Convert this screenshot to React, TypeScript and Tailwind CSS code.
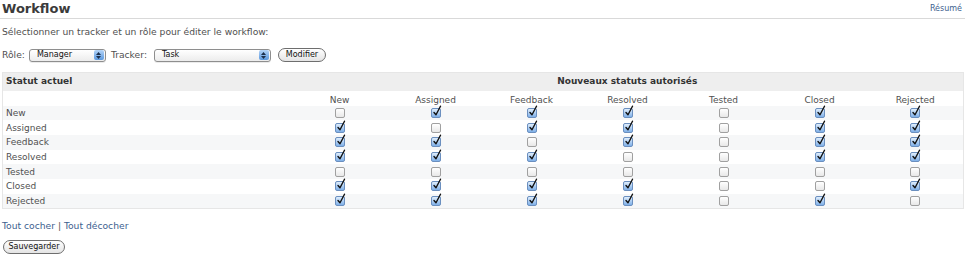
const statuses = ["New", "Assigned", "Feedback", "Resolved", "Tested", "Closed", "Rejected"];

// rows = current status, columns = new allowed status
const matrix = [
  [0, 1, 1, 1, 0, 1, 1],
  [1, 0, 1, 1, 0, 1, 1],
  [1, 1, 0, 1, 0, 1, 1],
  [1, 1, 1, 0, 0, 1, 1],
  [0, 0, 0, 0, 0, 0, 0],
  [1, 1, 1, 1, 0, 0, 1],
  [1, 1, 1, 1, 0, 1, 0],
];

const Checkbox = ({ checked }: { checked: boolean }) => {
  return (
    <span className="relative inline-block w-[10px] h-[10px] align-middle">
      {checked ? (
        <span className="absolute inset-0 rounded-[2px] border border-[#6b8fbf] bg-linear-to-b from-[#e0eefc] to-[#7fb0e8]" />
      ) : (
        <span className="absolute inset-0 rounded-[2px] border border-[#a0a0a0] bg-linear-to-b from-white to-[#e8e8e8]" />
      )}
      {checked && (
        <svg className="absolute left-[1px] top-[-3px]" width="10" height="12" viewBox="0 0 10 12">
          <path d="M2 7.5 L4 9.8 L8.5 1.2" fill="none" stroke="#111" strokeWidth="1.4" strokeLinecap="round" strokeLinejoin="round" />
        </svg>
      )}
    </span>
  );
};

const Select = ({ value, width }: { value: string; width: string }) => {
  return (
    <div className={`${width} h-[13px] flex items-center rounded-[3px] border border-[#8e8e8e] bg-linear-to-b from-white to-[#ececec] shadow-[0_1px_0_rgba(0,0,0,0.08)]`}>
      <span className="flex-1 pl-[7px] text-[8px] text-[#111] leading-none">{value}</span>
      <span className="w-[10px] h-[10px] mr-[1px] rounded-[2px] bg-linear-to-b from-[#b4d4f7] to-[#5a98de] flex flex-col items-center justify-center gap-[1px]">
        <svg width="5" height="3" viewBox="0 0 5 3"><path d="M0 3 L2.5 0 L5 3 Z" fill="#1c2f4a" /></svg>
        <svg width="5" height="3" viewBox="0 0 5 3"><path d="M0 0 L2.5 3 L5 0 Z" fill="#1c2f4a" /></svg>
      </span>
    </div>
  );
};

const PillButton = ({ label, width }: { label: string; width: string }) => {
  return (
    <button className={`${width} h-[14px] rounded-full border border-[#6e6e6e] bg-linear-to-b from-white to-[#e4e4e4] text-[8px] text-[#111] leading-none flex items-center justify-center`}>
      {label}
    </button>
  );
};

export default function App() {
  return (
    <div className="w-[965px] h-[259px] bg-white text-[#505050] overflow-hidden" style={{ fontFamily: '"DejaVu Sans", Verdana, sans-serif' }}>
      {/* Title */}
      <div className="h-[19px] flex justify-between items-start border-b border-[#d9d9d9] pl-[2px] pr-[3px]">
        <h2 className="text-[13px] leading-[17px] font-bold text-[#3b3b3b]">Workflow</h2>
        <a className="text-[8px] leading-none pt-[5px] text-[#3d5f8f]">Résumé</a>
      </div>

      <p className="mt-[6px] h-[14px] leading-[14px] text-[9.2px] pl-[2px]">
        Sélectionner un tracker et un rôle pour éditer le workflow:
      </p>

      <div className="mt-[9px] h-[14px] flex items-center pl-[2px] text-[9.2px]">
        <span>Rôle:</span>
        <div className="ml-[4px]"><Select value="Manager" width="w-[77px]" /></div>
        <span className="ml-[5px]">Tracker:</span>
        <div className="ml-[7px]"><Select value="Task" width="w-[117px]" /></div>
        <div className="ml-[7px]"><PillButton label="Modifier" width="w-[48px]" /></div>
      </div>

      {/* Workflow table */}
      <table className="mt-[10px] ml-[2px] w-[961px] border-collapse border border-[#e6e6e6] text-[9px] table-fixed">
        <colgroup>
          <col className="w-[289px]" />
          {statuses.map((s) => (
            <col key={s} className="w-[96px]" />
          ))}
        </colgroup>
        <thead>
          <tr className="h-[18px] bg-[#eeeeee]">
            <th className="text-left font-bold text-[#333] pl-[3px]">Statut actuel</th>
            <th colSpan={7} className="text-center font-bold text-[#333]">Nouveaux statuts autorisés</th>
          </tr>
          <tr className="h-[15px] bg-white">
            <td></td>
            {statuses.map((s) => (
              <td key={s} className="text-center align-bottom leading-[12px]">{s}</td>
            ))}
          </tr>
        </thead>
        <tbody>
          {statuses.map((s, i) => (
            <tr key={s} className={`h-[14.7px] ${i % 2 === 0 ? "bg-[#f6f7f8]" : "bg-white"}`}>
              <td className="pl-[3px] leading-[12px]">{s}</td>
              {matrix[i].map((v, j) => (
                <td key={j} className="text-center leading-none">
                  <Checkbox checked={v === 1} />
                </td>
              ))}
            </tr>
          ))}
        </tbody>
      </table>

      <div className="mt-[10px] h-[14px] leading-[14px] pl-[2px] text-[9.2px]">
        <a className="text-[#3d5f8f]">Tout cocher</a>
        <span> | </span>
        <a className="text-[#3d5f8f]">Tout décocher</a>
      </div>

      <div className="mt-[7px] pl-[3px]">
        <PillButton label="Sauvegarder" width="w-[62px]" />
      </div>
    </div>
  );
}
